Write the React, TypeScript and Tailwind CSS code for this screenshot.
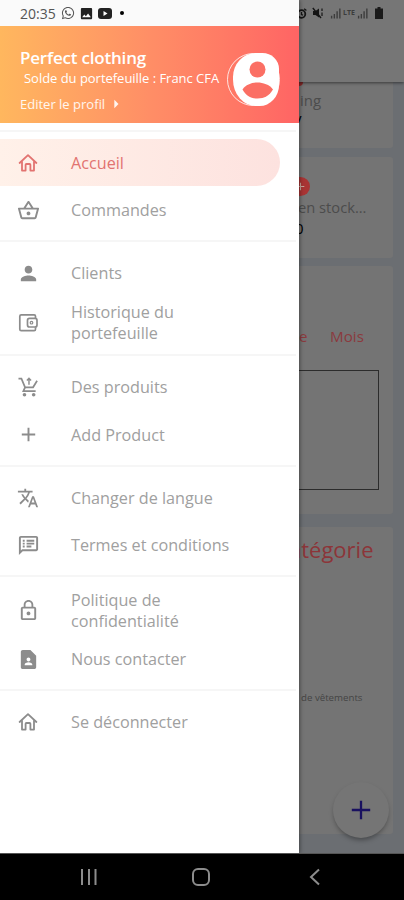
import type { ReactNode } from 'react'
import {
  MdAdd,
  MdArrowRight,
  MdContactPage,
  MdImage,
  MdLockOutline,
  MdOutlineShoppingBasket,
  MdOutlineSpeakerNotes,
  MdPerson,
  MdTranslate,
} from 'react-icons/md'
import { FaWhatsapp } from 'react-icons/fa'

function HomeIcon() {
  return (
    <svg width="20" height="20" viewBox="0 0 20 20" fill="none" stroke="currentColor" strokeWidth="1.8" strokeLinejoin="round" strokeLinecap="round">
      <path d="M1.600 10 10 2.200 18.400 10" />
      <path d="M4 9V17.600H7.600V11.800Q7.600 11 8.400 11H11.600Q12.400 11 12.400 11.800V17.600H16V9" />
    </svg>
  )
}

function WalletIcon() {
  return (
    <svg width="20" height="20" viewBox="0 0 20 20" fill="none" stroke="currentColor" strokeWidth="1.7">
      <path d="M17.500 5.300V3.200Q17.500 1.800 16.100 1.800H3.200Q1.800 1.800 1.800 3.200V16.200Q1.800 17.600 3.200 17.600H16.100Q17.500 17.600 17.500 16.200V14.200" />
      <rect x="9.500" y="5.400" width="9.500" height="8.600" rx="2" />
      <circle cx="13.500" cy="9.700" r="1.300" strokeWidth="1.200" />
    </svg>
  )
}

function CartIcon() {
  return (
    <svg width="21" height="21" viewBox="0 0 22 22" fill="none" stroke="currentColor" strokeWidth="1.800">
      <path d="M.5 1.800H3.600L7.400 10.800H15.800L20 4" />
      <path d="M7.400 10.800 5.600 14.800H18.500" />
      <path d="M11.500 1V8.200M9.300 3.600 11.500 1.400 13.700 3.600" strokeWidth="1.500" />
      <circle cx="6.800" cy="18.600" r="1.900" fill="currentColor" stroke="none" />
      <circle cx="16.400" cy="18.600" r="1.900" fill="currentColor" stroke="none" />
    </svg>
  )
}

function Item({ icon, active, tall, children }: { icon: ReactNode; active?: boolean; tall?: boolean; children: ReactNode }) {
  return (
    <div
      className={
        'flex w-[280px] shrink-0 items-center text-[16.200px] leading-[21px] ' +
        (tall ? 'h-[51px] ' : 'h-[47.5px] ') +
        (active ? 'rounded-r-full bg-linear-to-r from-[#fff1e9] to-[#fde2df] text-[#e27370]' : 'text-[#a0a0a0]')
      }
    >
      <span className={'flex w-[56px] justify-center pt-px ' + (active ? '' : 'text-[#8c8c8c]')}>{icon}</span>
      <span className="ml-[15px] w-[170px] pt-[2px]">{children}</span>
    </div>
  )
}

function Divider() {
  return (
    <div className="flex h-[15.5px] shrink-0 items-center">
      <div className="h-[2px] w-[296px] bg-[#f6f6f6]" />
    </div>
  )
}

function Header() {
  return (
    <div className="flex h-[97px] shrink-0 bg-linear-to-r from-[#ffb75e] via-[#ff8e66] to-[#ff6464] text-white">
      <div className="flex w-[227px] flex-col pl-[20px] pt-[21px] whitespace-nowrap">
        <div className="text-[17px] leading-[22px] font-semibold tracking-[-0.2px]">Perfect clothing</div>
        <div className="pl-[4px] text-[13px] leading-[18px] tracking-[-0.03px]">Solde du portefeuille : Franc CFA</div>
        <div className="mt-[7px] flex items-center text-[13px] leading-[18px] text-white/90">
          Editer le profil
          <MdArrowRight size={20} className="ml-px" />
        </div>
      </div>
      <div className="mt-[27px] flex h-[53px] w-[53px] justify-end rounded-full border border-white/80">
        <div className="-mt-px h-[53px] w-[46px] shrink-0 overflow-hidden rounded-[50%_36%_42%_50%/45%_30%_40%_50%] bg-white">
          <svg width="46" height="53" viewBox="0 0 46 53" fill="#fb6f64">
            <circle cx="24.500" cy="16.500" r="8" />
            <path d="M9.500 36.500C13 31.500 19 29.500 24.500 29.500S36.500 31.500 40 36.500C36.500 42.500 31.500 45.500 24.500 45.500S13 42.500 9.500 36.500Z" />
          </svg>
        </div>
      </div>
    </div>
  )
}

function StatusIcons() {
  return (
    <div className="flex h-[26px] items-center pl-[20px] text-[#555]">
      <span className="w-[36px] text-[14px]">20:35</span>
      <FaWhatsapp size={14} className="ml-[5px]" />
      <MdImage size={15} className="ml-[4px] text-[#222]" />
      <svg width="14" height="11" viewBox="0 0 14 11" className="ml-[4px]">
        <rect width="14" height="11" rx="3" fill="#222" />
        <path d="M5.500 3 9.500 5.500 5.500 8Z" fill="#fff" />
      </svg>
      <span className="ml-[8px] h-[4px] w-[4px] rounded-full bg-black" />
    </div>
  )
}

function Drawer() {
  return (
    <div className="flex w-[299px] shrink-0 flex-col bg-white">
      <div className="h-[26px] shrink-0 bg-[#fafafa]">
        <StatusIcons />
      </div>
      <Header />
      <Divider />
      <Item active icon={<HomeIcon />}>Accueil</Item>
      <Item icon={<MdOutlineShoppingBasket size={23} />}>Commandes</Item>
      <Divider />
      <Item icon={<MdPerson size={23} />}>Clients</Item>
      <Item tall icon={<WalletIcon />}>Historique du portefeuille</Item>
      <Divider />
      <Item icon={<CartIcon />}>Des produits</Item>
      <Item icon={<MdAdd size={23} />}>Add Product</Item>
      <Divider />
      <Item icon={<MdTranslate size={22} />}>Changer de langue</Item>
      <Item icon={<MdOutlineSpeakerNotes size={23} />}>Termes et conditions</Item>
      <Divider />
      <Item tall icon={<MdLockOutline size={23} />}>Politique de confidentialité</Item>
      <Item icon={<MdContactPage size={23} />}>Nous contacter</Item>
      <Divider />
      <Item icon={<HomeIcon />}>Se déconnecter</Item>
    </div>
  )
}

function Signal() {
  return (
    <svg width="11" height="11" viewBox="0 0 12 11" fill="#3c3c3c" className="shrink-0">
      <path d="M1 8h1.500v3H1zM4 6h1.500v5H4zM7 3h1.500v8H7zM10 0h1.500v11H10z" />
    </svg>
  )
}

// the dashboard under the drawer, already dimmed by the scrim
function Dashboard() {
  return (
    <div className="flex w-[105px] shrink-0 flex-col overflow-hidden bg-[#6b6e72] whitespace-nowrap">
      <div className="z-10 h-[82px] shrink-0 bg-[#767676] shadow-[0_1px_3px_rgba(0,0,0,0.5)]">
        <div className="flex h-[26px] items-center text-[#151515]">
          <svg width="11" height="11" viewBox="0 0 11 11" fill="none" stroke="currentColor" strokeWidth="1.800" className="-ml-[3px] shrink-0">
            <circle cx="5.500" cy="6" r="3.800" />
            <path d="M.6 2.600 2.800.8M10.400 2.600 8.200.8M5.500 4V6.500L7 7.200" strokeWidth="1.300" />
          </svg>
          <svg width="12" height="12" viewBox="0 0 12 12" fill="currentColor" stroke="currentColor" className="ml-[5px] shrink-0">
            <path d="M1 4H3.500L7 1.500V10.500L3.500 8H1Z" stroke="none" />
            <path d="M.8 1 9 11" strokeWidth="1.400" />
            <path d="M10 1.500V4M10 5.500V9" strokeWidth="1.200" />
          </svg>
          <span className="ml-[6px] flex items-center gap-px">
            <Signal />
            <span className="w-[14px] text-center text-[7px] leading-[12px] font-bold text-[#3c3c3c]">LTE</span>
            <Signal />
          </span>
          <svg width="8" height="12" viewBox="0 0 8 12" className="ml-[7px]" fill="#1a1a1a">
            <path d="M2.500 0h3v1.500H8V12H0V1.500h2.500z" />
          </svg>
        </div>
      </div>

      <div className="h-[66px] w-[94px] shrink-0 rounded-br-[3px] bg-[#747474]">
        <div className="-ml-[6px] h-[4px] w-[10px] rounded-b-full bg-[#8c2b2b]" />
        <div className="mt-[4px] pl-[1px] text-[15px] leading-[20px] text-[#4c4c4c]">ing</div>
        <div className="-ml-[5px] -mt-[1px] text-[15px] leading-[18px] text-black">y</div>
      </div>

      <div className="mt-[9px] h-[101px] w-[94px] shrink-0 rounded-r-[3px] bg-[#747474]">
        <div className="-ml-[8px] mt-[20px] flex h-[19px] w-[19px] items-center justify-center rounded-full bg-[#a83434] text-[#c7a69a]">
          <MdAdd size={13} />
        </div>
        <div className="-ml-px text-[14.700px] leading-[22px] text-[#4c4c4c]">en stock...</div>
        <div className="-ml-[4px] text-[15px] leading-[20px] text-black">0</div>
      </div>

      <div className="mt-[8px] h-[248px] w-[94px] shrink-0 rounded-r-[3px] bg-[#747474]">
        <div className="mt-[60px] flex text-[15.200px] leading-[21px] text-[#8b3a3e]">
          <span className="w-[31px]">e</span>
          <span>Mois</span>
        </div>
        <div className="mt-[23px] h-[120px] w-[80px] border-[1.5px] border-l-0 border-[#2c2c2c]" />
      </div>

      <div className="mt-[13px] flex h-[307px] w-[94px] shrink-0 flex-col rounded-r-[3px] bg-[#747474]">
        <div className="-ml-[10px] mt-[7px] text-[22px] leading-[30px] text-[#8c3539]">atégorie</div>
        <div className="mt-[127px] pl-[2px] text-[9.700px] leading-[14px] text-[#444]">de vêtements</div>
        <div className="ml-[34px] mt-[77px] flex h-[56px] w-[56px] shrink-0 items-center justify-center rounded-full bg-[#757575] text-[#191160] shadow-[0_3px_5px_-1px_rgba(0,0,0,0.35)]">
          <svg width="20" height="20" viewBox="0 0 20 20" stroke="currentColor" strokeWidth="2.300">
            <path d="M10 .8V19.200M.8 10H19.200" />
          </svg>
        </div>
      </div>
    </div>
  )
}

function NavBar() {
  return (
    <div className="flex h-[47px] items-center border-t border-[#555] bg-black text-[#8c8c8c]">
      <svg width="18" height="18" viewBox="0 0 18 18" stroke="currentColor" strokeWidth="2" className="ml-[80px]">
        <path d="M2 1V17M9 1V17M15.500 1V17" />
      </svg>
      <div className="ml-[94px] h-[18px] w-[18px] rounded-[6px] border-2 border-[#8c8c8c]" />
      <svg width="12" height="18" viewBox="0 0 12 18" fill="none" stroke="currentColor" strokeWidth="2" className="ml-[99px]">
        <path d="M10 1.500 2 9 10 16.500" />
      </svg>
    </div>
  )
}

export default function App() {
  return (
    <div className="h-[900px] w-[404px] overflow-hidden bg-black font-['Open_Sans','Noto_Sans',sans-serif]">
      <div className="flex h-[853px] overflow-hidden">
        {/* drawer sits above the page content */}
        <div className="z-20 flex shadow-[1px_0_4px_rgba(0,0,0,0.4)]">
          <Drawer />
        </div>
        <Dashboard />
      </div>
      <NavBar />
    </div>
  )
}
